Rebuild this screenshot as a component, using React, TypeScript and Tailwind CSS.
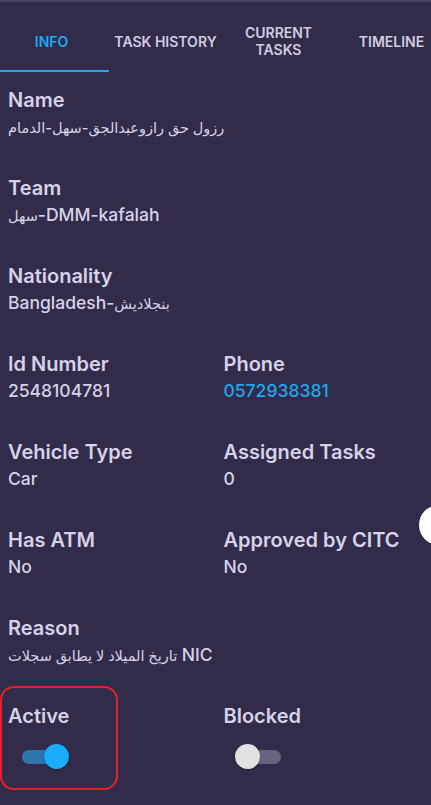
import React from "react";

const tabs = [
  { label: "INFO", w: "w-[109px]" },
  { label: "TASK HISTORY", w: "w-[113px]" },
  { label: "CURRENT TASKS", w: "w-[113px]" },
  { label: "TIMELINE", w: "w-[113px]" },
];

// Arabic glyphs fall back to DejaVu, which runs wide, so they get a smaller size
const Ar = ({ children }: { children: React.ReactNode }) => <span className="text-[14.5px]">{children}</span>;

function Field({ label, value, blue }: { label: string; value: React.ReactNode; blue?: boolean }) {
  return (
    <div className="mb-[35px]">
      <div className="text-[20px] leading-[29px] font-semibold text-[#d6d2e9]">{label}</div>
      <div className={`h-[24px] text-[17.5px] leading-[24px] font-medium ${blue ? "text-[#1ea8f0]" : "text-[#d6d2e9]"}`}>
        {value}
      </div>
    </div>
  );
}

function Toggle({ on }: { on: boolean }) {
  if (on) {
    return (
      <div className="relative ml-[14px] mt-[13px] h-[25px] w-[47px]">
        <div className="absolute left-0 top-[6px] h-[14px] w-[34px] rounded-full bg-[#2a76ad]" />
        <div className="absolute left-[22px] top-0 h-[25px] w-[25px] rounded-full bg-[#18aefc] shadow-[0_1px_2px_rgba(0,0,0,0.3)]" />
      </div>
    );
  }
  return (
    <div className="relative ml-[11px] mt-[13px] h-[25px] w-[57px]">
      <div className="absolute left-[12px] top-[6px] h-[14px] w-[34px] rounded-full bg-[#68637f]" />
      <div className="absolute left-0 top-0 h-[25px] w-[25px] rounded-full bg-[#e2e2e2] shadow-[0_1px_2px_rgba(0,0,0,0.3)]" />
    </div>
  );
}

export default function App() {
  return (
    <div
      className="relative min-h-[805px] w-full overflow-hidden border-t-2 border-[#4a4562] bg-[#322c4a]"
      style={{ fontFamily: 'Inter, "DejaVu Sans", sans-serif' }}
    >
      {/* tabs */}
      <div className="relative flex h-[70px]">
        {tabs.map((t, i) => (
          <div
            key={t.label}
            className={`${t.w} flex shrink-0 items-center justify-center pt-[8px] text-center text-[14px] leading-[17px] font-semibold ${
              i === 0 ? "pr-[6px] text-[#1ba9f3]" : "text-[#d0cce2]"
            }`}
          >
            {t.label === "CURRENT TASKS" ? (
              <span>
                CURRENT
                <br />
                TASKS
              </span>
            ) : (
              t.label
            )}
          </div>
        ))}
        <div className="absolute bottom-0 left-0 h-[2px] w-[109px] bg-[#1ba9f3]" />
      </div>

      <div className="px-2 pt-[14px]">
        <Field label="Name" value={<Ar>رزول حق رازوعبدالجق-سهل-الدمام</Ar>} />
        <Field
          label="Team"
          value={
            <>
              <Ar>سهل</Ar>-DMM-kafalah
            </>
          }
        />
        <Field
          label="Nationality"
          value={
            <>
              Bangladesh-<Ar>بنجلاديش</Ar>
            </>
          }
        />
        <div className="grid grid-cols-2 gap-x-4">
          <Field label="Id Number" value="2548104781" />
          <Field label="Phone" value="0572938381" blue />
          <Field label="Vehicle Type" value="Car" />
          <Field label="Assigned Tasks" value="0" />
          <Field label="Has ATM" value="No" />
          <Field label="Approved by CITC" value="No" />
        </div>
        <Field
          label="Reason"
          value={
            <>
              <Ar>تاريخ الميلاد لا يطابق سجلات</Ar> NIC
            </>
          }
        />
        <div className="grid grid-cols-2 gap-x-4">
          <div className="relative">
            <div className="pointer-events-none absolute -left-[8px] -top-[16px] h-[104px] w-[118px] rounded-[14px] border-2 border-[#e3202b]" />
            <div className="text-[20px] leading-[29px] font-semibold text-[#d6d2e9]">Active</div>
            <Toggle on />
          </div>
          <div>
            <div className="text-[20px] leading-[29px] font-semibold text-[#d6d2e9]">Blocked</div>
            <Toggle on={false} />
          </div>
        </div>
      </div>

      {/* floating button cut at the edge */}
      <div className="absolute left-[419px] top-[503px] h-[40px] w-[40px] rounded-full bg-white" />
    </div>
  );
}
